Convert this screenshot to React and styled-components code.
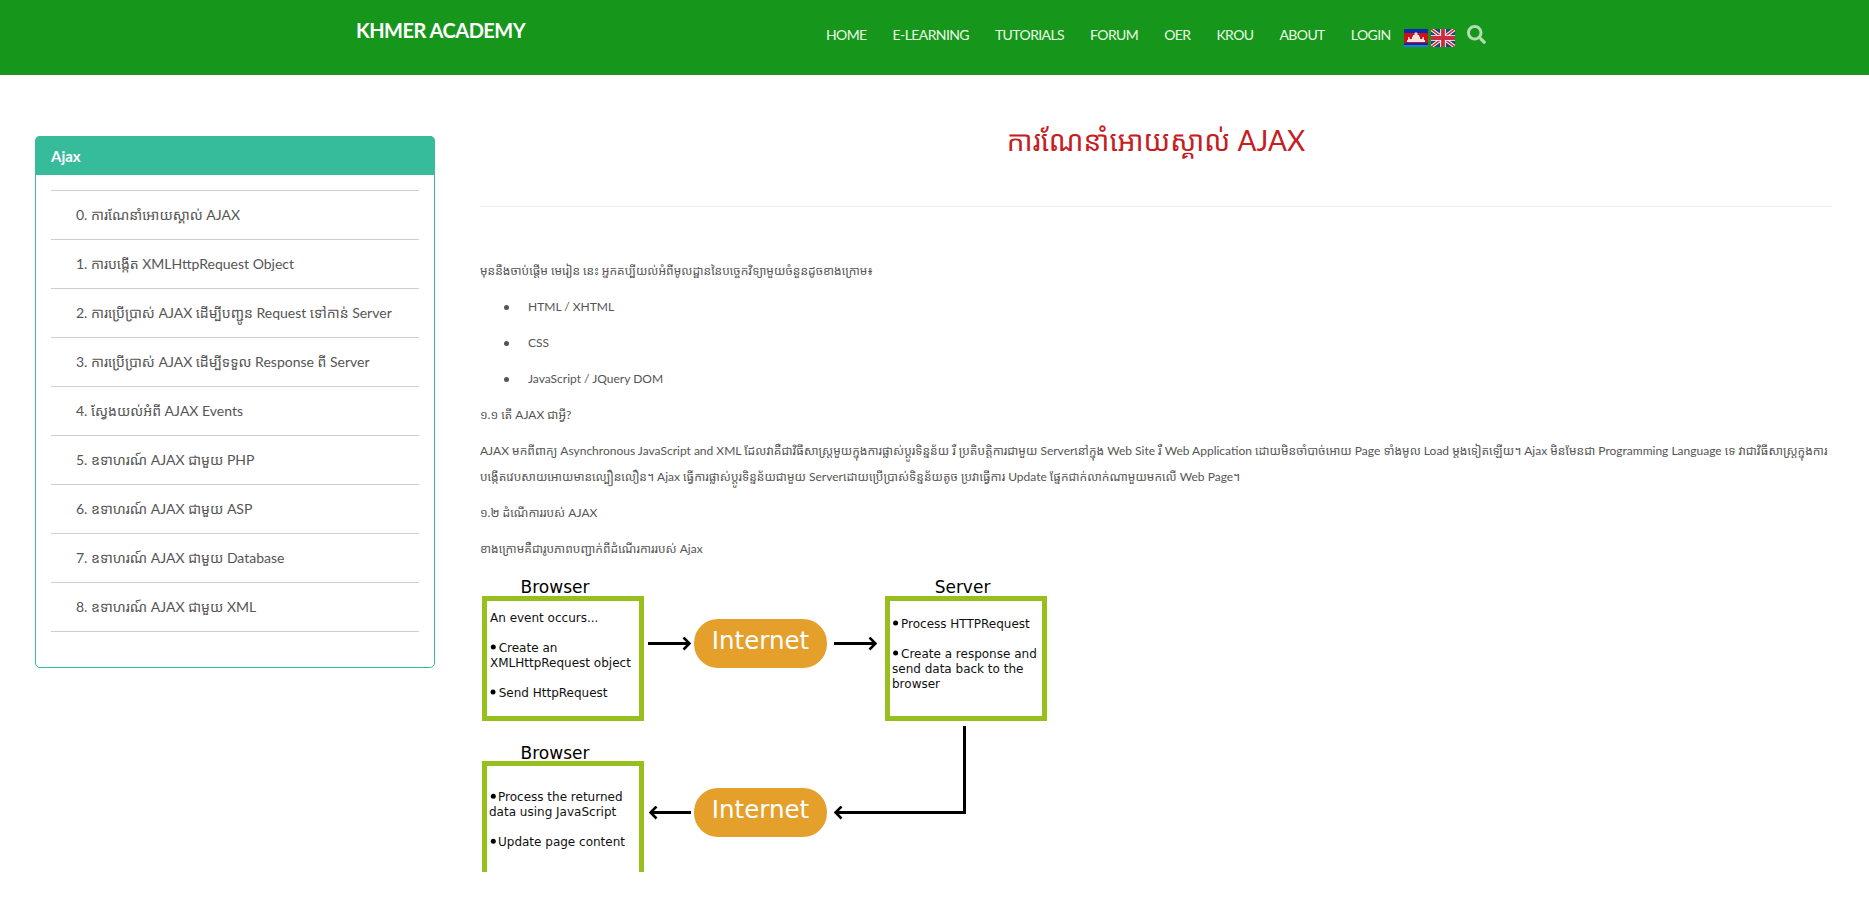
import React from "react";
import styled, { createGlobalStyle } from "styled-components";
import { FaSearch } from "react-icons/fa";

const Global = createGlobalStyle`
  * { box-sizing: border-box; }
  html, body { margin: 0; padding: 0; background: #fff; }
  body {
    font-family: Lato, "Noto Sans Khmer", "Khmer OS", "Noto Sans", sans-serif;
    color: #555;
  }
`;

const NAV = ["HOME", "E-LEARNING", "TUTORIALS", "FORUM", "OER", "KROU", "ABOUT", "LOGIN"];

const LESSONS = [
  "0. ការណែនាំអោយស្គាល់ AJAX",
  "1. ការបង្កើត XMLHttpRequest Object",
  "2. ការប្រើប្រាស់ AJAX ដើម្បីបញ្ជូន Request ទៅកាន់ Server",
  "3. ការប្រើប្រាស់ AJAX ដើម្បីទទួល Response ពី Server",
  "4. ស្វែងយល់អំពី AJAX Events",
  "5. ឧទាហរណ៍ AJAX ជាមួយ PHP",
  "6. ឧទាហរណ៍ AJAX ជាមួយ ASP",
  "7. ឧទាហរណ៍ AJAX ជាមួយ Database",
  "8. ឧទាហរណ៍ AJAX ជាមួយ XML",
];

function Flags() {
  return (
    <FlagRow>
      <svg width="24" height="18" viewBox="0 0 24 18">
        <rect width="24" height="18" fill="#0a2bb0" />
        <rect y="4" width="24" height="10" fill="#d00f1a" />
        <rect y="16" width="24" height="2" fill="#1f7fd8" />
        <path d="M3 13V11H4V8H5.500V10H8V7.500H9V6H10.500V4H11.500V3H12.500V4H13.500V6H15V7.500H16V10H18.500V8H20V11H21V13z" fill="#f6e3dc" />
      </svg>
      <svg width="24" height="18" viewBox="0 0 24 18">
        <rect width="24" height="18" fill="#27407f" />
        <path d="M0 0L24 18M24 0L0 18" stroke="#fff" strokeWidth="3.400" />
        <path d="M0 0L24 18M24 0L0 18" stroke="#cf2b3e" strokeWidth="1.600" />
        <path d="M12 0V18M0 9H24" stroke="#fff" strokeWidth="5.600" />
        <path d="M12 0V18M0 9H24" stroke="#cf2b3e" strokeWidth="3.800" />
      </svg>
    </FlagRow>
  );
}

function Diagram() {
  return (
    <Chart viewBox="480 576 570 296" width="570" height="296">
      <defs>
        <marker id="head" viewBox="0 0 10 14" refX="9" refY="7" markerWidth="10" markerHeight="14" markerUnits="userSpaceOnUse" orient="auto">
          <path d="M2.500 1L8.500 7L2.500 13" fill="none" stroke="#000" strokeWidth="2.600" />
        </marker>
      </defs>

      <BoxTitle x="555" y="592.500">Browser</BoxTitle>
      <Box x="484.500" y="598.500" width="157" height="120" />
      <BoxText x="490" y="621.500">An event occurs...</BoxText>
      <Dot cx="493.300" cy="647" r="2.500" />
      <BoxText x="498.700" y="651.500">Create an</BoxText>
      <BoxText x="490" y="666.500">XMLHttpRequest object</BoxText>
      <Dot cx="493" cy="692" r="2.500" />
      <BoxText x="498.700" y="696.500">Send HttpRequest</BoxText>

      <Arrow d="M648 643.500H690" />
      <Pill x="694" y="619" width="133" height="49" rx="24" />
      <PillText x="760.500" y="649">Internet</PillText>
      <Arrow d="M834 643.500H876" />

      <BoxTitle x="962.500" y="593">Server</BoxTitle>
      <Box x="887.500" y="598.500" width="157" height="120" />
      <Dot cx="895.600" cy="623" r="2.500" />
      <BoxText x="901" y="627.500">Process HTTPRequest</BoxText>
      <Dot cx="895.600" cy="653" r="2.500" />
      <BoxText x="901" y="657.500">Create a response and</BoxText>
      <BoxText x="892" y="672.500">send data back to the</BoxText>
      <BoxText x="892" y="687.500">browser</BoxText>

      <Arrow d="M964.500 726V812.500H835" />
      <Pill x="694" y="788" width="133" height="49" rx="24" />
      <PillText x="760.500" y="818">Internet</PillText>
      <Arrow d="M691 812.500H650" />

      <BoxTitle x="555" y="758.500">Browser</BoxTitle>
      <Box x="484.500" y="763.500" width="157" height="130" />
      <Dot cx="493.300" cy="796.300" r="2.500" />
      <BoxText x="498" y="800.500">Process the returned</BoxText>
      <BoxText x="489" y="815.500">data using JavaScript</BoxText>
      <Dot cx="493.300" cy="841.300" r="2.500" />
      <BoxText x="498" y="845.500">Update page content</BoxText>
    </Chart>
  );
}

export default function App() {
  return (
    <>
      <Global />
      <TopBar>
        <Logo>KHMER ACADEMY</Logo>
        <Nav>
          {NAV.map((item) => (
            <NavLink key={item}>{item}</NavLink>
          ))}
          <Flags />
          <SearchIcon />
        </Nav>
      </TopBar>

      <Page>
        <Sidebar>
          <PanelHead>Ajax</PanelHead>
          <LessonList>
            {LESSONS.map((lesson) => (
              <Lesson key={lesson}>{lesson}</Lesson>
            ))}
          </LessonList>
        </Sidebar>

        <Content>
          <Title>ការណែនាំអោយស្គាល់ AJAX</Title>
          <Rule />
          <Text>មុននឹងចាប់ផ្តើម មេរៀន នេះ អ្នកគប្បីយល់អំពីមូលដ្ឋាននៃបច្ចេកវិទ្យាមួយចំនួនដូចខាងក្រោម៖</Text>
          <Bullets>
            <li>HTML / XHTML</li>
            <li>CSS</li>
            <li>JavaScript / JQuery DOM</li>
          </Bullets>
          <Text>១.១ តើ AJAX ជាអ្វី?</Text>
          <Text>
            AJAX មកពីពាក្យ Asynchronous JavaScript and XML ដែលវាគឺជាវិធីសាស្ត្រមួយក្នុងការផ្លាស់ប្តូរទិន្នន័យ រឺ ប្រតិបត្តិការជាមួយ Serverនៅក្នុង Web Site រឺ Web Application ដោយមិនចាំបាច់អោយ Page ទាំងមូល Load ម្តងទៀតឡើយ។ Ajax មិនមែនជា Programming Language ទេ វាជាវិធីសាស្ត្រក្នុងការបង្កើតវេបសាយអោយមានល្បឿនលឿន។ Ajax ធ្វើការផ្លាស់ប្តូរទិន្នន័យជាមួយ Serverដោយប្រើប្រាស់ទិន្នន័យតូច ប្រវាធ្វើការ Update ផ្នែកជាក់លាក់ណាមួយមកលើ Web Page។
          </Text>
          <Text>១.២ ដំណើការរបស់ AJAX</Text>
          <Text>ខាងក្រោមគឺជារូបភាពបញ្ជាក់ពីដំណើរការរបស់ Ajax</Text>
          <Diagram />
        </Content>
      </Page>
    </>
  );
}

const TopBar = styled.header`
  height: 75px;
  background: #16961b;
  padding-left: 356px;
  display: flex;
  align-items: flex-start;
`;

const Logo = styled.div`
  width: 470px;
  margin-top: 17px;
  font-size: 20px;
  line-height: 26px;
  font-weight: 700;
  letter-spacing: -0.5px;
  color: #fff;
  white-space: nowrap;
`;

const Nav = styled.nav`
  display: flex;
  align-items: flex-start;
  gap: 26px;
  margin-top: 25px;
`;

const NavLink = styled.a`
  font-size: 14px;
  line-height: 20px;
  letter-spacing: -0.6px;
  color: #eafbe6;
  white-space: nowrap;
`;

const FlagRow = styled.div`
  display: flex;
  gap: 3px;
  margin: 4px 0 0 -13px;
`;

const SearchIcon = styled(FaSearch)`
  width: 19px;
  height: 19px;
  margin: 0 0 0 -14px;
  color: #b3dcb0;
`;

const Page = styled.main`
  display: flex;
  align-items: flex-start;
  padding: 0 37px 0 35px;
`;

const Sidebar = styled.aside`
  flex: none;
  width: 400px;
  height: 532px;
  margin-top: 61px;
  border: 1px solid #36bc9b;
  border-radius: 5px;
`;

const PanelHead = styled.div`
  height: 39px;
  margin: -1px -1px 0;
  padding: 0 16px;
  border-radius: 5px 5px 0 0;
  background: #36bc9b;
  color: #fff;
  font-size: 15px;
  font-weight: 700;
  line-height: 40px;
`;

const LessonList = styled.ul`
  list-style: none;
  margin: 15px 15px 0;
  padding: 0;
  border-top: 1px solid #ccced9;
`;

const Lesson = styled.li`
  height: 49px;
  padding-left: 25px;
  border-bottom: 1px solid #ccced9;
  font-size: 14px;
  line-height: 48px;
  white-space: nowrap;
`;

const Content = styled.section`
  flex: 1;
  min-width: 0;
  margin-left: 45px;
`;

const Title = styled.h1`
  margin: 45px 0 0;
  height: 44px;
  font-size: 28px;
  font-weight: 400;
  line-height: 40px;
  text-align: center;
  color: #c5201f;
`;

const Rule = styled.hr`
  margin: 42px 0 0;
  border: 0;
  border-top: 1px solid #eee;
`;

const Text = styled.p`
  margin: 0 0 10px;
  font-size: 12px;
  line-height: 26px;
  &:first-of-type {
    margin-top: 51px;
  }
`;

const Bullets = styled.ul`
  list-style: none;
  margin: 0;
  padding-left: 48px;
  font-size: 12px;
  line-height: 26px;
  li {
    display: flex;
    align-items: center;
    margin-bottom: 10px;
  }
  li::before {
    content: "";
    flex: none;
    width: 5px;
    height: 5px;
    margin: 0 19px 0 -24px;
    border-radius: 50%;
    background: #555;
  }
`;

const Chart = styled.svg`
  display: block;
  margin-top: 14px;
`;

const Box = styled.rect`
  fill: #fff;
  stroke: #97bf1d;
  stroke-width: 5;
`;

const BoxTitle = styled.text`
  font-family: "DejaVu Sans", sans-serif;
  font-size: 17px;
  text-anchor: middle;
  fill: #000;
`;

const BoxText = styled.text`
  font-family: "DejaVu Sans", sans-serif;
  font-size: 12px;
  fill: #111;
`;

const Dot = styled.circle`
  fill: #000;
`;

const Pill = styled.rect`
  fill: #e5a02b;
`;

const PillText = styled.text`
  font-family: "DejaVu Sans", sans-serif;
  font-size: 24.500px;
  text-anchor: middle;
  fill: #fff;
`;

const Arrow = styled.path.attrs({ markerEnd: "url(#head)" })`
  fill: none;
  stroke: #000;
  stroke-width: 3;
`;
